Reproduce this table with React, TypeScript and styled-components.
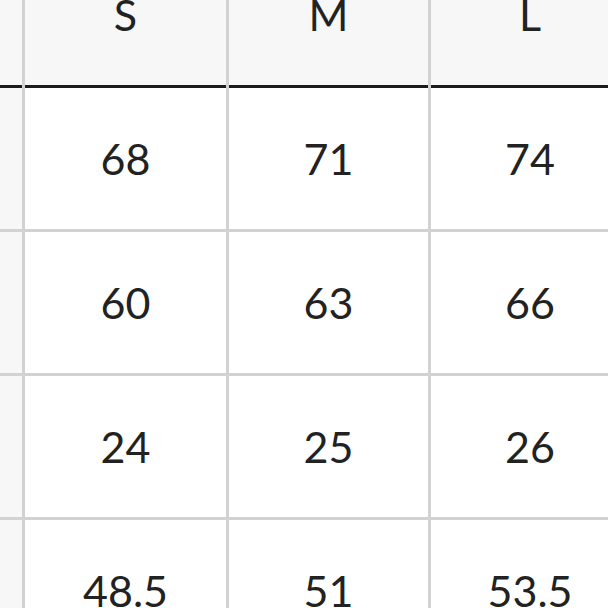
import React from "react";
import styled, { createGlobalStyle } from "styled-components";

const Global = createGlobalStyle`
  html, body { margin: 0; padding: 0; background: #ffffff; overflow: hidden; }
  body { width: 608px; height: 608px; }
`;

const Viewport = styled.div`
  width: 608px;
  height: 608px;
  overflow: hidden;
  background: #ffffff;
`;

const Grid = styled.div`
  display: grid;
  grid-template-columns: 22px 201px 199px 198px;
  grid-auto-rows: auto;
  column-gap: 3px;
  background: #d2d2d2;
  margin-top: -56px;
  width: max-content;
  font-family: Lato, "Liberation Sans", Arial, sans-serif;
  color: #222222;
`;

const Cell = styled.div<{ $head?: boolean; $label?: boolean }>`
  height: 141px;
  display: flex;
  align-items: center;
  justify-content: center;
  font-size: 43px;
  font-weight: 400;
  background: ${(p) => (p.$head || p.$label ? "#f7f7f7" : "#ffffff")};
  border-bottom: 3px solid ${(p) => (p.$head ? "#1c1c1c" : "#d2d2d2")};
`;

const sizes = ["S", "M", "L"];
const rows = [
  ["68", "71", "74"],
  ["60", "63", "66"],
  ["24", "25", "26"],
  ["48.5", "51", "53.5"],
];

export default function App() {
  return (
    <Viewport>
      <Global />
      <Grid>
        <Cell $head />
        {sizes.map((s) => (
          <Cell key={s} $head>
            {s}
          </Cell>
        ))}
        {rows.map((r, i) => (
          <React.Fragment key={i}>
            <Cell $label />
            {r.map((v, j) => (
              <Cell key={j}>{v}</Cell>
            ))}
          </React.Fragment>
        ))}
      </Grid>
    </Viewport>
  );
}
